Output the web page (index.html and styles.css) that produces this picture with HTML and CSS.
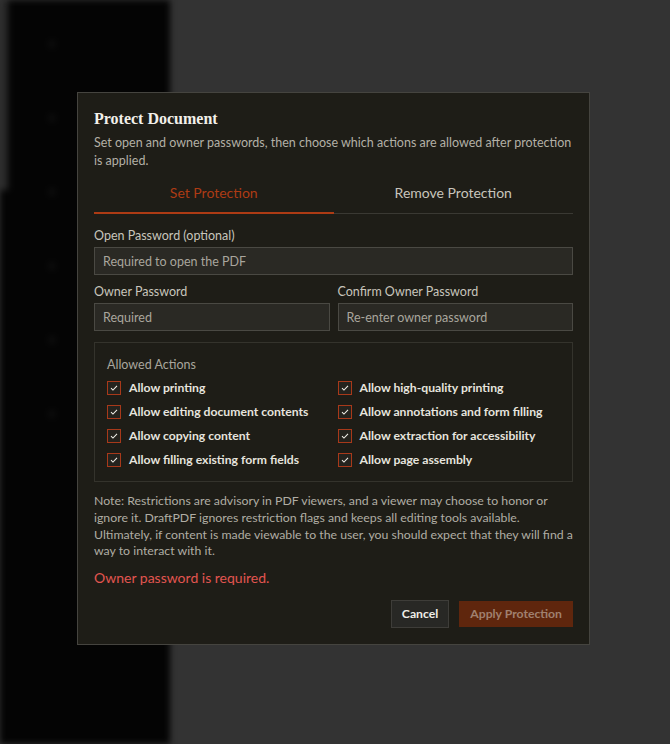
FILE: index.html
```html
<!doctype html>
<html>
<head>
<meta charset="utf-8">
<title>Protect Document</title>
<link rel="stylesheet" href="styles.css">
</head>
<body>
<div class="app">
    <div class="sidebar">
        <div class="thumb"></div>
        <div class="dots">
            <span></span><span></span><span></span><span></span><span></span><span></span>
        </div>
    </div>
    <div class="workspace"></div>
</div>

<div class="overlay">
    <div class="dialog">
        <h2 class="title">Protect Document</h2>
        <p class="subtitle">Set open and owner passwords, then choose which actions are allowed after protection is applied.</p>

        <div class="tabs">
            <div class="tab active">Set Protection</div>
            <div class="tab">Remove Protection</div>
        </div>

        <label class="field">
            <span class="label">Open Password (optional)</span>
            <input type="password" class="input" placeholder="Required to open the PDF">
        </label>

        <div class="row">
            <label class="field">
                <span class="label">Owner Password</span>
                <input type="password" class="input" placeholder="Required">
            </label>
            <label class="field">
                <span class="label">Confirm Owner Password</span>
                <input type="password" class="input" placeholder="Re-enter owner password">
            </label>
        </div>

        <fieldset class="actions">
            <div class="legend">Allowed Actions</div>
            <div class="grid">
                <label class="check"><span class="box"><svg viewBox="0 0 14 14"><path d="M3.5 7.2l2.3 2.2 4.7-4.8"/></svg></span>Allow printing</label>
                <label class="check"><span class="box"><svg viewBox="0 0 14 14"><path d="M3.5 7.2l2.3 2.2 4.7-4.8"/></svg></span>Allow high-quality printing</label>
                <label class="check"><span class="box"><svg viewBox="0 0 14 14"><path d="M3.5 7.2l2.3 2.2 4.7-4.8"/></svg></span>Allow editing document contents</label>
                <label class="check"><span class="box"><svg viewBox="0 0 14 14"><path d="M3.5 7.2l2.3 2.2 4.7-4.8"/></svg></span>Allow annotations and form filling</label>
                <label class="check"><span class="box"><svg viewBox="0 0 14 14"><path d="M3.5 7.2l2.3 2.2 4.7-4.8"/></svg></span>Allow copying content</label>
                <label class="check"><span class="box"><svg viewBox="0 0 14 14"><path d="M3.5 7.2l2.3 2.2 4.7-4.8"/></svg></span>Allow extraction for accessibility</label>
                <label class="check"><span class="box"><svg viewBox="0 0 14 14"><path d="M3.5 7.2l2.3 2.2 4.7-4.8"/></svg></span>Allow filling existing form fields</label>
                <label class="check"><span class="box"><svg viewBox="0 0 14 14"><path d="M3.5 7.2l2.3 2.2 4.7-4.8"/></svg></span>Allow page assembly</label>
            </div>
        </fieldset>

        <p class="note">Note: Restrictions are advisory in PDF viewers, and a viewer may choose to honor or ignore it. DraftPDF ignores restriction flags and keeps all editing tools available. Ultimately, if content is made viewable to the user, you should expect that they will find a way to interact with it.</p>

        <p class="error">Owner password is required.</p>

        <div class="buttons">
            <button class="btn cancel">Cancel</button>
            <button class="btn apply" disabled>Apply Protection</button>
        </div>
    </div>
</div>
</body>
</html>
```

FILE: styles.css
```css
html, body{
    margin: 0;
    height: 100%;
}
body{
    font-family: Lato, "Noto Sans", sans-serif;
    background-color: #333;
    overflow: hidden;
}

/* blurred app behind the modal */
.app{
    display: flex;
    height: 100%;
}
.sidebar{
    width: 170px;
    background-color: #040404;
    filter: blur(3px);
}
.thumb{
    width: 8px;
    height: 190px;
    background-color: #2a2a2a;
}
.dots{
    display: flex;
    flex-direction: column;
    gap: 66px;
    margin: -150px 0 0 48px;
}
.dots span{
    width: 8px;
    height: 8px;
    border-radius: 4px;
    background-color: #0e0e0e;
}
.workspace{
    flex: 1;
    background-color: #333;
}

.overlay{
    position: fixed;
    inset: 0;
    display: flex;
    align-items: center;
    justify-content: center;
    padding: 0 3px 7px 0;
}
.dialog{
    width: 479px;
    padding: 15px 16px 16px 16px;
    background-color: #1e1d17;
    border: 1px solid #45443f;
    color: #e6e4dc;
}

.title{
    margin: 0;
    font-family: "Liberation Serif", serif;
    font-size: 16px;
    font-weight: bold;
    color: #f2f0ea;
    line-height: 22px;
}
.subtitle{
    margin: 4px 0 0 0;
    font-size: 12.5px;
    line-height: 18px;
    color: #b3b0a6;
}

.tabs{
    display: flex;
    margin-top: 14px;
    border-bottom: 1px solid #3a3933;
}
.tab{
    flex: 1;
    text-align: center;
    font-size: 14px;
    color: #c8c5bc;
    padding-bottom: 11px;
    margin-bottom: -1px;
    border-bottom: 2px solid transparent;
}
.tab.active{
    color: #ad3b14;
    border-bottom-color: #ad3b14;
}

.field{
    display: flex;
    flex-direction: column;
    flex: 1;
    margin-top: 14px;
}
.label{
    font-size: 12.5px;
    color: #c8c5bc;
    line-height: 16px;
    margin-bottom: 3px;
}
.input{
    box-sizing: border-box;
    height: 28px;
    padding: 0 8px;
    background-color: #2a2924;
    border: 1px solid #4a4943;
    color: #e6e4dc;
    font-family: inherit;
    font-size: 12.5px;
    outline: none;
}
.input::placeholder{
    color: #a9a69d;
}
.row{
    display: flex;
    gap: 8px;
}
.row .field{
    margin-top: 9px;
}

.actions{
    margin: 11px 0 0 0;
    padding: 14px 12px 13px 12px;
    border: 1px solid #34332c;
    min-width: 0;
}
.legend{
    font-size: 12.5px;
    color: #a9a69d;
    line-height: 16px;
    margin-bottom: 7px;
}
.grid{
    display: grid;
    grid-template-columns: 1fr 1fr;
    column-gap: 8px;
    row-gap: 8px;
}
.check{
    display: flex;
    align-items: center;
    gap: 8px;
    font-size: 12.2px;
    font-weight: bold;
    color: #e6e4de;
    line-height: 16px;
}
.box{
    box-sizing: border-box;
    width: 14px;
    height: 14px;
    border: 1px solid #a8391a;
    background-color: #24231e;
}
.box svg{
    display: block;
    width: 12px;
    height: 12px;
    fill: none;
    stroke: #f2f0ea;
    stroke-width: 1.2;
}

.note{
    margin: 11px 0 0 0;
    font-size: 12.3px;
    line-height: 16.7px;
    color: #b0ada4;
}
.error{
    margin: 8px 0 0 0;
    font-size: 14px;
    line-height: 20px;
    color: #e25550;
}

.buttons{
    display: flex;
    justify-content: flex-end;
    align-items: center;
    gap: 10px;
    margin-top: 12px;
}
.btn{
    height: 28px;
    padding: 0 10px;
    font-family: inherit;
    font-size: 12.2px;
    font-weight: bold;
    border: 1px solid transparent;
}
.cancel{
    background-color: #282825;
    border-color: #3e3d39;
    color: #f0eee8;
}
.apply{
    background-color: #5f260d;
    color: #a0806f;
    height: 26px;
}
```
